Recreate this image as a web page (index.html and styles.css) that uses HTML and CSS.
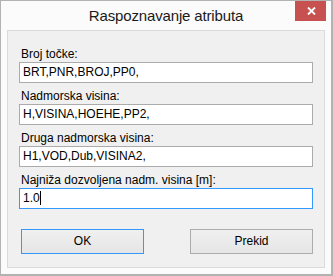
FILE: index.html
```html
<!DOCTYPE html>
<html lang="hr">
<head>
    <meta charset="UTF-8">
    <meta name="viewport" content="width=device-width, initial-scale=1.0">
    <title>Raspoznavanje atributa</title>
    <link rel="stylesheet" href="styles.css">
</head>
<body>

<!-- Dialog window -->
<div class="window">
    <div class="title-bar">
        <span></span>
        <div class="title">Raspoznavanje atributa</div>
        <div class="close-btn">
            <svg width="9" height="8" viewBox="0 0 9 8">
                <path d="M1 0.5 L8 7.5 M8 0.5 L1 7.5" stroke="#fff" stroke-width="1.9" fill="none"/>
            </svg>
        </div>
    </div>

    <div class="client">
        <div class="fields">
            <div class="field">
                <div class="field-label">Broj točke:</div>
                <div class="textbox">BRT,PNR,BROJ,PP0,</div>
            </div>
            <div class="field">
                <div class="field-label">Nadmorska visina:</div>
                <div class="textbox">H,VISINA,HOEHE,PP2,</div>
            </div>
            <div class="field">
                <div class="field-label">Druga nadmorska visina:</div>
                <div class="textbox">H1,VOD,Dub,VISINA2,</div>
            </div>
            <div class="field">
                <div class="field-label">Najniža dozvoljena nadm. visina [m]:</div>
                <div class="textbox focused">1.0<span class="caret"></span></div>
            </div>
        </div>

        <div class="button-row">
            <div class="btn default">OK</div>
            <div class="btn">Prekid</div>
        </div>
    </div>
</div>

</body>
</html>
```

FILE: styles.css
```css
body {
    margin: 0;
    padding: 0;
    font-family: "Liberation Sans", Arial, sans-serif;
    font-size: 12px;
    color: #000;
}

/* Window frame */
.window {
    width: 333px;
    height: 276px;
    box-sizing: border-box;
    border: 1px solid #b2b2b2;
    border-right-width: 2px;
    border-bottom-width: 2px;
    background-color: #fbfbfb;
    padding: 0 6px 6px 6px;
    display: flex;
    flex-direction: column;
}

.title-bar {
    height: 29px;
    display: grid;
    grid-template-columns: 1fr auto 1fr;
    flex-shrink: 0;
}

.title {
    font-size: 15px;
    line-height: 29px;
    color: #1a1a1a;
    letter-spacing: -0.15px;
    white-space: nowrap;
}

.close-btn {
    justify-self: end;
    width: 31px;
    height: 20px;
    margin-right: -1px;
    background-color: #c75050;
    display: flex;
    align-items: center;
    justify-content: center;
}

.close-btn svg {
    display: block;
    margin-left: 1px;
}

/* Client area */
.client {
    flex-grow: 1;
    border: 1px solid #dadada;
    background-color: #f0f0f0;
    padding: 16px 11px 13px 11px;
    display: flex;
    flex-direction: column;
}

.fields {
    display: flex;
    flex-direction: column;
    gap: 6px;
}

.field-label {
    line-height: 15px;
    padding-left: 2px;
    white-space: nowrap;
}

.textbox {
    height: 21px;
    box-sizing: border-box;
    border: 1px solid #ababab;
    background-color: #fff;
    padding-left: 3px;
    line-height: 19px;
    white-space: nowrap;
}

.textbox.focused {
    border-color: #3399ff;
}

.caret {
    display: inline-block;
    width: 0;
    height: 14px;
    border-left: 1px solid #000;
    vertical-align: -3px;
}

/* Buttons */
.button-row {
    margin-top: 20px;
    padding-left: 2px;
    display: flex;
    justify-content: space-between;
}

.btn {
    width: 123px;
    height: 25px;
    box-sizing: border-box;
    border: 1px solid #acacac;
    background: linear-gradient(#f0f0f0, #e5e5e5);
    text-align: center;
    line-height: 23px;
}

.btn.default {
    border-color: #3399ff;
}
```
